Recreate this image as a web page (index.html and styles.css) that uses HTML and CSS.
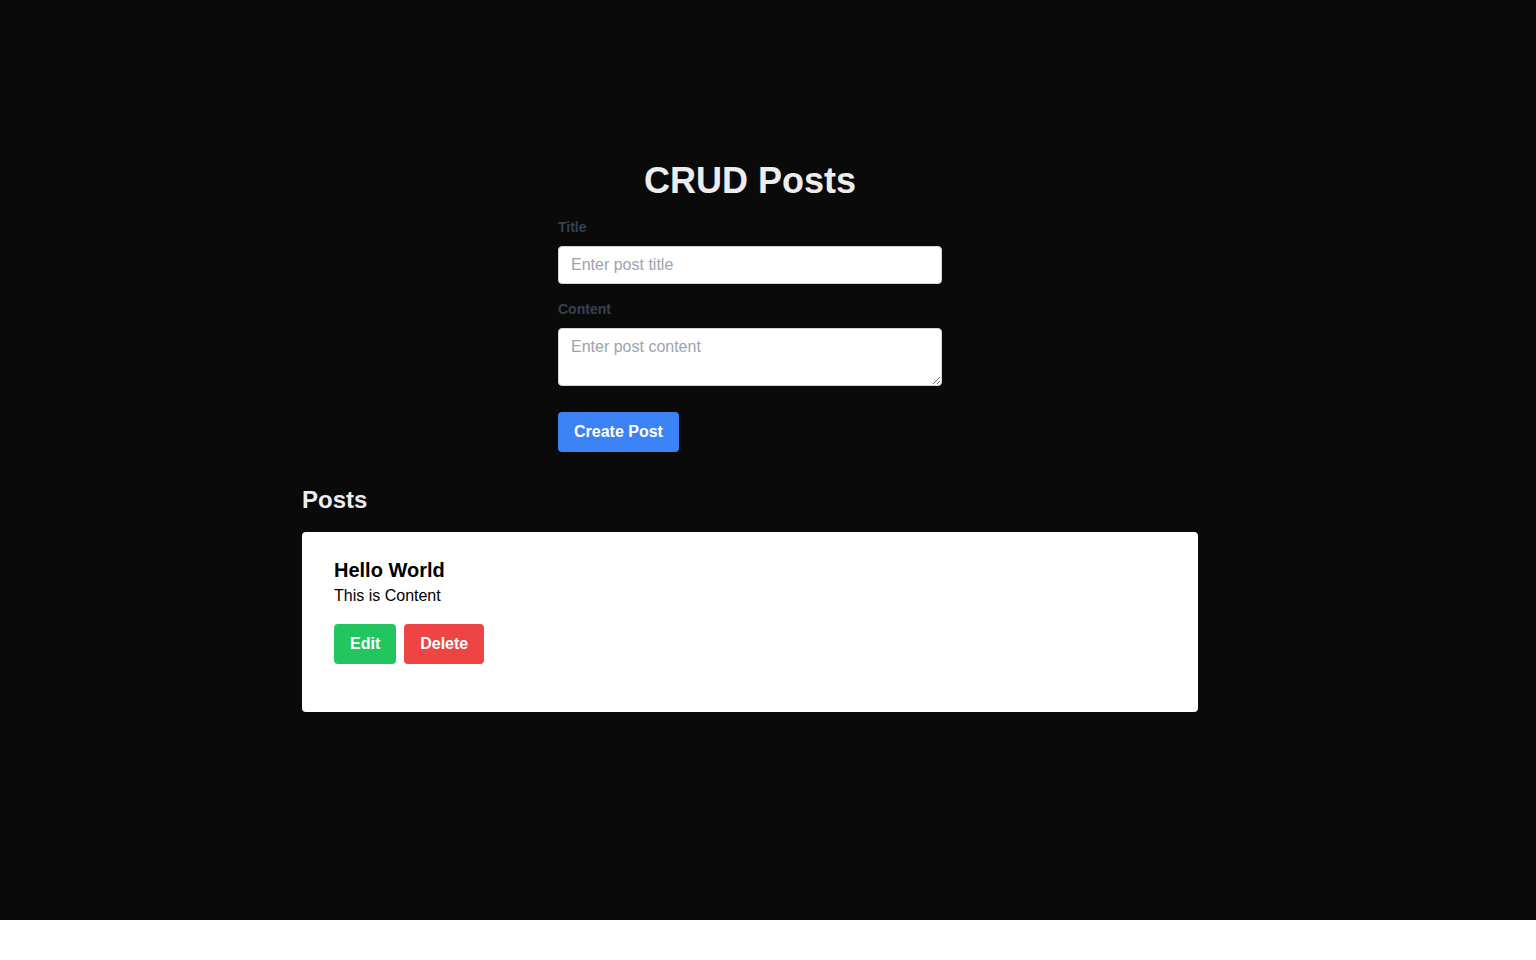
FILE: index.html
```html
<!DOCTYPE html>
<html lang="en">
<head>
<meta charset="utf-8">
<title>CRUD Posts</title>
<link rel="stylesheet" href="styles.css">
</head>
<body>
<div class="page">
  <main class="main">
    <h1 class="page-title">CRUD Posts</h1>
    <form class="post-form">
      <div class="field">
        <label class="field-label" for="title">Title</label>
        <input class="field-input" id="title" type="text" placeholder="Enter post title">
      </div>
      <div class="field">
        <label class="field-label" for="content">Content</label>
        <textarea class="field-input field-textarea" id="content" placeholder="Enter post content"></textarea>
      </div>
      <button class="btn btn-blue" type="button">Create Post</button>
    </form>
    <section class="posts">
      <h2 class="posts-title">Posts</h2>
      <div class="post-card">
        <h3 class="post-title">Hello World</h3>
        <p class="post-content">This is Content</p>
        <div class="post-actions">
          <button class="btn btn-green" type="button">Edit</button>
          <button class="btn btn-red" type="button">Delete</button>
        </div>
      </div>
    </section>
  </main>
</div>
</body>
</html>
```

FILE: styles.css
```css
* { box-sizing: border-box; }
html, body {
  margin: 0;
  padding: 0;
  background: #ffffff;
  font-family: "Liberation Sans", Arial, sans-serif;
}
.page {
  height: 920px;
  background: #0a0a0a;
  color: #ededed;
}
.main {
  width: 1500px;
  padding-top: 161px;
  display: flex;
  flex-direction: column;
  align-items: center;
}
.page-title {
  margin: 0 0 16px;
  font-size: 36px;
  line-height: 40px;
  font-weight: 700;
  color: #ededed;
  text-align: center;
}
.post-form {
  width: 384px;
  display: flex;
  flex-direction: column;
  align-items: flex-start;
}
.field {
  width: 100%;
  display: flex;
  flex-direction: column;
  margin-bottom: 15px;
}
.field-label {
  font-size: 14px;
  line-height: 20px;
  font-weight: 700;
  color: #374151;
  margin-bottom: 9px;
}
.field-input {
  width: 100%;
  height: 38px;
  margin: 0;
  padding: 8px 12px;
  border: 1px solid #d1d5db;
  border-radius: 4px;
  background: #ffffff;
  color: #111827;
  font-family: "Liberation Sans", Arial, sans-serif;
  font-size: 16px;
  line-height: 20px;
  outline: none;
}
.field-input::placeholder { color: #9ca3af; }
.field-textarea {
  display: block;
  height: 58px;
  resize: vertical;
  margin-bottom: 11px;
}
.btn {
  height: 40px;
  padding: 0 16px;
  border: none;
  border-radius: 4px;
  color: #ffffff;
  font-family: "Liberation Sans", Arial, sans-serif;
  font-size: 16px;
  font-weight: 700;
  line-height: 40px;
  cursor: pointer;
}
.btn-blue { background: #3b82f6; }
.btn-green { background: #22c55e; }
.btn-red { background: #ef4444; }
.posts {
  width: 896px;
  margin-top: 32px;
}
.posts-title {
  margin: 0 0 16px;
  font-size: 24px;
  line-height: 32px;
  font-weight: 700;
  color: #ededed;
}
.post-card {
  background: #ffffff;
  border-radius: 4px;
  padding: 24px 32px 48px;
  color: #000000;
}
.post-title {
  margin: 0;
  font-size: 20px;
  line-height: 28px;
  font-weight: 700;
}
.post-content {
  margin: 0 0 16px;
  font-size: 16px;
  line-height: 24px;
}
.post-actions {
  display: flex;
  gap: 8px;
}
```
